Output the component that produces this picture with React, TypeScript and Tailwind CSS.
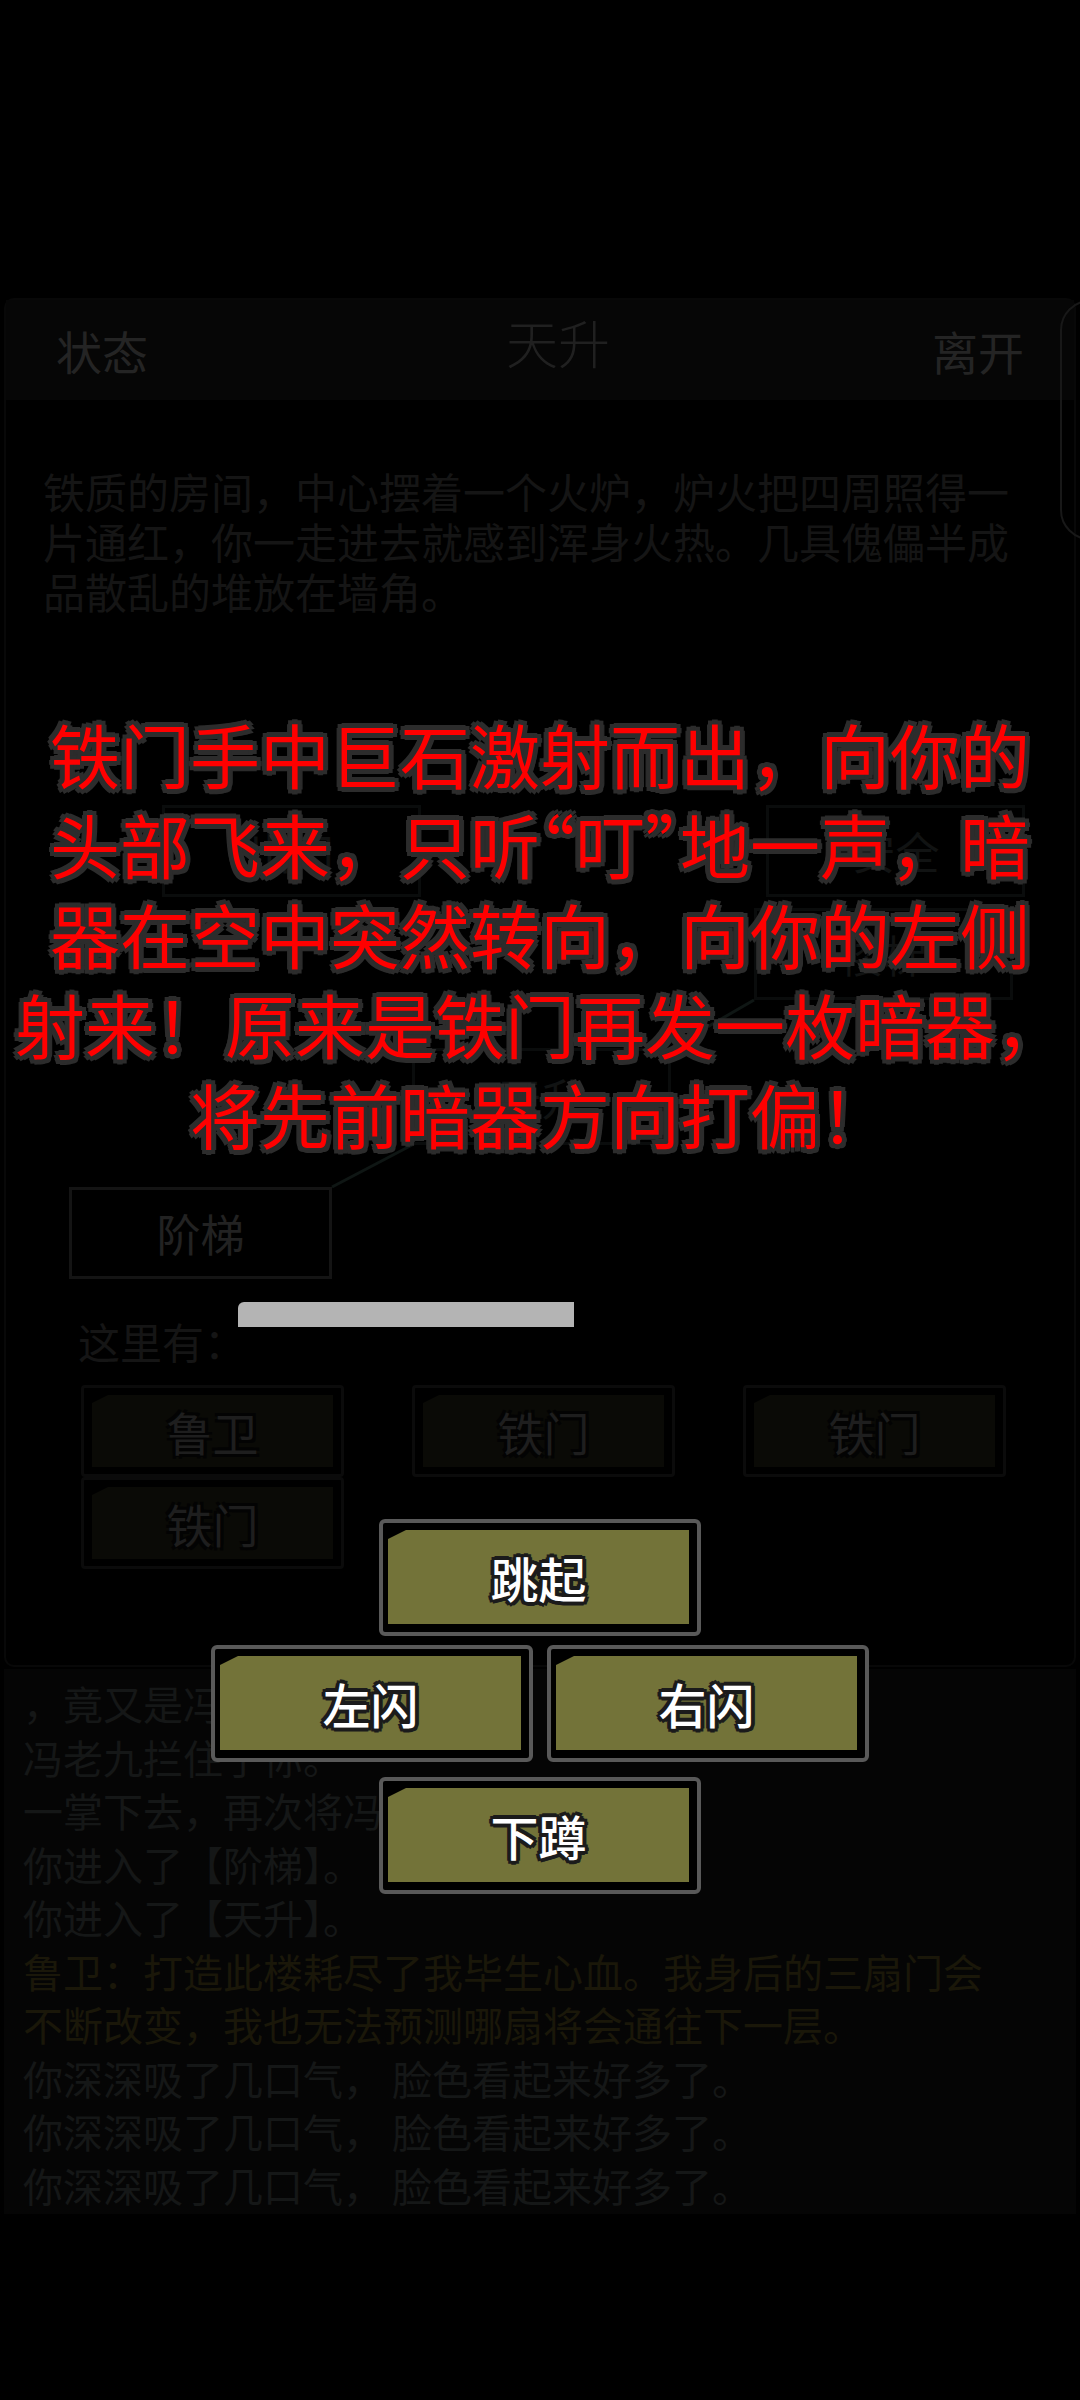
const RED_OUTLINE =
  "[text-shadow:-4px_-4px_0_#2c2c2c,4px_-4px_0_#2c2c2c,-4px_4px_0_#2c2c2c,4px_4px_0_#2c2c2c,0_-5px_0_#2c2c2c,0_5px_0_#2c2c2c,-5px_0_0_#2c2c2c,5px_0_0_#2c2c2c]";
const WHITE_OUTLINE =
  "[text-shadow:-3px_-3px_0_#1b1b1b,3px_-3px_0_#1b1b1b,-3px_3px_0_#1b1b1b,3px_3px_0_#1b1b1b,0_-4px_0_#1b1b1b,0_4px_0_#1b1b1b,-4px_0_0_#1b1b1b,4px_0_0_#1b1b1b]";
const DIM_OUTLINE =
  "[text-shadow:-3px_-3px_0_#030303,3px_-3px_0_#030303,-3px_3px_0_#030303,3px_3px_0_#030303]";

const logLines = [
  { text: "，竟又是冯老九！", tone: "text-[#151717]" },
  { text: "冯老九拦住了你。", tone: "text-[#151717]" },
  { text: "一掌下去，再次将冯老九打退。", tone: "text-[#151717]" },
  { text: "你进入了【阶梯】。", tone: "text-[#151717]" },
  { text: "你进入了【天升】。", tone: "text-[#151717]" },
  { text: "鲁卫：打造此楼耗尽了我毕生心血。我身后的三扇门会", tone: "text-[#1a1709]" },
  { text: "不断改变，我也无法预测哪扇将会通往下一层。", tone: "text-[#1a1709]" },
  { text: "你深深吸了几口气， 脸色看起来好多了。", tone: "text-[#151717]" },
  { text: "你深深吸了几口气， 脸色看起来好多了。", tone: "text-[#151717]" },
  { text: "你深深吸了几口气， 脸色看起来好多了。", tone: "text-[#151717]" },
];

function ActionButton({ label }: { label: string }) {
  return (
    <div className="h-[117px] w-[322px] rounded-[6px] border-[4px] border-[#595959] bg-black pt-[7px] pr-[8px] pb-[8px] pl-[5px]">
      <div className="flex h-full items-center justify-center bg-[#737339] [clip-path:polygon(18px_0,100%_0,100%_100%,0_100%,0_9px)]">
        <span className={`text-[48px] leading-none font-medium text-white ${WHITE_OUTLINE}`}>{label}</span>
      </div>
    </div>
  );
}

function Npc({ label }: { label: string }) {
  return (
    <div className="h-[92px] w-[263px] rounded-[4px] border-[3px] border-[#0b0b0b] bg-black px-[8px] py-[7px]">
      <div className="flex h-full items-center justify-center bg-[#0a0a06] [clip-path:polygon(16px_0,100%_0,100%_100%,0_100%,0_8px)]">
        <span className={`text-[46px] leading-none text-[#1e1e1e] ${DIM_OUTLINE}`}>{label}</span>
      </div>
    </div>
  );
}

function Room({ name, pos, bright }: { name: string; pos: string; bright?: boolean }) {
  return (
    <div
      className={`absolute flex items-center justify-center border-[3px] ${pos} ${
        bright ? "border-[#141414] text-[#222222]" : "border-[#0a0c0c] text-[#111313]"
      } text-[44px] leading-none`}
    >
      {name}
    </div>
  );
}

export default function App() {
  return (
    <div className="relative h-[2400px] w-[1080px] overflow-hidden bg-black font-['Noto_Sans_CJK_SC','Noto_Sans',sans-serif]">
      {/* dimmed game screen underneath */}
      <div className="pt-[298px]">
        <div className="mx-[4px] rounded-[10px] border-2 border-[#080808]">
          {/* header */}
          <div className="flex h-[100px] items-center justify-between bg-[#060606] pr-[50px] pl-[50px]">
            <span className="text-[46px] leading-none text-[#242424]">状态</span>
            <span className="mb-[16px] ml-[36px] text-[52px] leading-none font-light text-[#202020]">天升</span>
            <span className="text-[46px] leading-none text-[#242424]">离开</span>
          </div>

          {/* scene */}
          <div className="h-[1265px] pt-[66px]">
            <p className="px-[37px] text-[42px] leading-[50px] text-[#151515]">
              铁质的房间，中心摆着一个火炉，炉火把四周照得一
              <br />
              片通红，你一走进去就感到浑身火热。几具傀儡半成
              <br />
              品散乱的堆放在墙角。
            </p>

            {/* map */}
            <div className="relative h-[679px]">
              <svg className="absolute inset-0" width="1076" height="679">
                <line x1="326" y1="571" x2="406" y2="529" stroke="#0f1614" strokeWidth="3" />
                <line x1="665" y1="432" x2="748" y2="384" stroke="#0f1614" strokeWidth="3" />
              </svg>
              <Room name="出口" pos="left-[156px] top-[189px] h-[92px] w-[259px]" />
              <Room name="安全" pos="left-[760px] top-[189px] h-[92px] w-[259px]" />
              <Room name="楼梯" pos="left-[748px] top-[292px] h-[92px] w-[259px]" />
              <Room name="天升" pos="left-[406px] top-[432px] h-[97px] w-[259px]" />
              <Room name="阶梯" pos="left-[63px] top-[571px] h-[92px] w-[263px]" bright />
            </div>

            <p className="mt-[21px] pl-[72px] text-[42px] leading-[50px] text-[#151515]">这里有：</p>

            <div className="mt-[19px] grid w-fit grid-cols-[263px_263px_263px] gap-x-[68px] pl-[75px]">
              <Npc label="鲁卫" />
              <Npc label="铁门" />
              <Npc label="铁门" />
              <Npc label="铁门" />
            </div>
          </div>
        </div>

        {/* log */}
        <div className="mx-[4px] mt-[2px] h-[545px] bg-[#050505] pt-[8px] pl-[19px]">
          {logLines.map((l, i) => (
            <p key={i} className={`text-[40px] leading-[53.5px] whitespace-nowrap ${l.tone}`}>
              {l.text}
            </p>
          ))}
        </div>
      </div>

      {/* side tab peeking from the right */}
      <div className="absolute top-[300px] left-[1060px] h-[240px] w-[80px] rounded-[30px] border-2 border-[#181818]" />

      {/* progress bar */}
      <div className="absolute top-[1302px] left-[238px] h-[25px] w-[336px] rounded-tl-[6px] bg-[#b4b4b4]" />

      {/* red event text */}
      <div
        className={`absolute top-[709px] left-0 w-[1080px] text-center text-[70px] leading-[90px] font-normal whitespace-nowrap text-[#ff0000] ${RED_OUTLINE}`}
      >
        <p>铁门手中巨石激射而出，向你的</p>
        <p>
          头部飞来，只听<span className="[font-feature-settings:'halt']">“</span>叮
          <span className="[font-feature-settings:'halt']">”</span>地一声，暗
        </p>
        <p>器在空中突然转向，向你的左侧</p>
        <p>射来！原来是铁门再发一枚暗器，</p>
        <p>将先前暗器方向打偏！</p>
      </div>

      {/* dodge buttons */}
      <div className="absolute top-[1519px] left-0 flex w-[1080px] flex-col items-center">
        <ActionButton label="跳起" />
        <div className="mt-[9px] flex gap-[14px]">
          <ActionButton label="左闪" />
          <ActionButton label="右闪" />
        </div>
        <div className="mt-[15px]">
          <ActionButton label="下蹲" />
        </div>
      </div>
    </div>
  );
}
